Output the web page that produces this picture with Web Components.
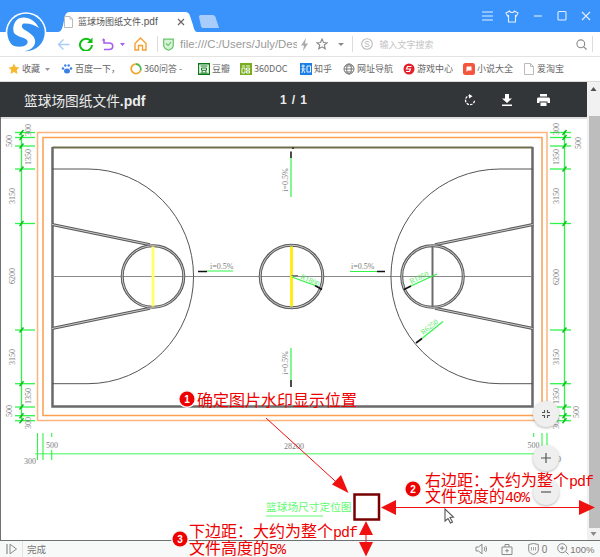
<!DOCTYPE html>
<html>
<head>
<meta charset="utf-8">
<style>
html, body { margin: 0; padding: 0; }
body { width: 600px; height: 557px; overflow: hidden; position: relative; background: #fff; font-family: "Noto Sans CJK SC", "Liberation Sans", sans-serif; }
</style>
</head>
<body>
<browser-titlebar title-text="篮球场图纸文件.pdf"></browser-titlebar>
<browser-toolbar url="file:///C:/Users/July/Desktop" placeholder="输入文字搜索"></browser-toolbar>
<bookmark-bar>
  <bookmark-item icon="star" width="53" arrow>收藏</bookmark-item>
  <bookmark-item icon="paw" width="69">百度一下，</bookmark-item>
  <bookmark-item icon="ring" width="68">360问答 -</bookmark-item>
  <bookmark-item icon="douban" width="42">豆瓣</bookmark-item>
  <bookmark-item icon="guan" width="60">360DOC</bookmark-item>
  <bookmark-item icon="zhi" width="43">知乎</bookmark-item>
  <bookmark-item icon="globe" width="60">网址导航</bookmark-item>
  <bookmark-item icon="game" width="60">游戏中心</bookmark-item>
  <bookmark-item icon="novel" width="60">小说大全</bookmark-item>
  <bookmark-item icon="doc" width="60">爱淘宝</bookmark-item>
</bookmark-bar>
<pdf-window>
  <pdf-toolbar title-text="篮球场图纸文件.pdf"></pdf-toolbar>
</pdf-window>
<status-bar>完成</status-bar>
<annotation-layer></annotation-layer>

<script>
// small helper, every element keeps its markup in its own shadow root
function shadow(el, html) {
  el.attachShadow({ mode: 'open' }).innerHTML = html;
}

class BrowserTitlebar extends HTMLElement {
  connectedCallback() {
    shadow(this, `
      <style>
        :host { display: block; height: 32px; background: #3a92fb; position: relative; }
        .row { display: flex; height: 32px; align-items: flex-end; padding-left: 58px; }
        .tab { width: 139px; height: 20px; position: relative; display: flex; align-items: center; }
        .tab svg.shape { position: absolute; left: 0; top: 0; }
        .doc { position: relative; margin-left: 6px; }
        .name { position: relative; margin-left: 5px; font: 9px/12px "Noto Sans CJK SC", sans-serif; color: #555; white-space: nowrap; width: 99px; }
        .name span { font: 10px "Liberation Sans", sans-serif; }
        .close { position: relative; margin-left: 0; }
        .newtab { margin: 0 0 4px 1px; }
        .win { margin-left: auto; display: flex; align-items: center; gap: 9px; height: 32px; padding-right: 8px; }
        .logo { position: absolute; left: 5px; top: 12px; }
      </style>
      <div class="row">
        <div class="tab">
          <svg class="shape" width="139" height="20"><path d="M0 20 C3 20 4 17 5 13 L7 4 C8 1 9 0 12 0 H127 C130 0 131 1 132 4 L135 13 C136 17 137 20 139 20 Z" fill="#fff"/></svg>
          <svg class="doc" width="9" height="12"><path d="M.5.5H6L8.5 3V11.5H.5Z M6 .5V3H8.5" fill="#fff" stroke="#bbb"/></svg>
          <div class="name">篮球场图纸文件<span>.pdf</span></div>
          <svg class="close" width="8" height="8"><path d="M1 1L7 7M7 1L1 7" stroke="#666" stroke-width="1.2"/></svg>
        </div>
        <svg class="newtab" width="22" height="13"><path d="M3 0H15C16 0 17 1 17.500 2L21 13H5C4 13 3.500 12.500 3 11L1 2C.8 1 1.500 0 3 0Z" fill="#a9cdfb"/></svg>
        <div class="win">
          <svg width="16" height="12"><path d="M2 2H13M2 6H13M2 10H13" stroke="#e2efff" stroke-width="1.100"/></svg>
          <svg width="14" height="13"><path d="M4.500 1L1 3L2.500 6L3.500 5.500V12H10.500V5.500L11.500 6L13 3L9.500 1C9 3 5 3 4.500 1Z" fill="none" stroke="#e2efff" stroke-width="1.100"/></svg>
          <svg width="16" height="12" style="margin-left:2px"><path d="M4 6H12" stroke="#e2efff" stroke-width="1.100"/></svg>
          <svg width="14" height="12"><rect x="3" y="1.500" width="8" height="8.500" rx="1" fill="none" stroke="#e2efff" stroke-width="1.100"/></svg>
          <svg width="12" height="12" style="margin-left:2px"><path d="M2 2L10 10M10 2L2 10" stroke="#e2efff" stroke-width="1.100"/></svg>
        </div>
      </div>
      <svg class="logo" width="44" height="44" viewBox="5 12 44 44">
        <circle cx="26" cy="32.500" r="20.300" fill="#fff"/>
        <circle cx="26" cy="32.500" r="18.700" fill="#3390f2"/>
        <path d="M39 28 C35 20 27 16 20 18 C14 20 12 28 14 33 C17 37 24 37 27 40 C29 43 26 46 22 46.500 C17 47 13 46 10 44 C13 49 19 51.500 25 51 C32 50 36 45 35 40 C34 35 28 32 25 30 C21 28 21 24 24 23.500 C29 23 35 25 39 28 Z" fill="#fff"/>
      </svg>`);
  }
}

class BrowserToolbar extends HTMLElement {
  connectedCallback() {
    const url = this.getAttribute('url');
    const ph = this.getAttribute('placeholder');
    shadow(this, `
      <style>
        :host { display: block; height: 25px; box-sizing: border-box; background: #fff; border-bottom: 1px solid #e3e3e3; }
        .row { display: flex; align-items: center; height: 24px; padding-left: 57px; }
        .sep { width: 1px; height: 16px; background: #dcdcdc; flex: none; }
        .url { width: 117px; flex: none; overflow: hidden; white-space: nowrap; margin-left: 6.500px; font: 11.400px "Liberation Sans", sans-serif; color: #999; }
        .ph { font: 9px "Noto Sans CJK SC", sans-serif; color: #c4c4c4; margin-left: 7px; }
        svg { display: block; flex: none; }
      </style>
      <div class="row">
        <svg width="13" height="13"><path d="M12.500 6.500H1.500M6.500 1.500L1.500 6.500L6.500 11.500" fill="none" stroke="#aacdf6" stroke-width="1.400"/></svg>
        <svg width="14" height="14" style="margin-left:9px"><path d="M12 4.500A6 6 0 1 0 13 8" fill="none" stroke="#10bf12" stroke-width="2"/><path d="M13.500 .5V6H8Z" fill="#10bf12"/></svg>
        <svg width="14" height="14" style="margin-left:8px"><path d="M3 2V6H8C13 6 13 12.500 8 12.500H3" fill="none" stroke="#a75cf0" stroke-width="1.600"/><path d="M.5 3.500H3V1Z" fill="#a75cf0"/></svg>
        <svg width="5" height="3" style="margin-left:4.500px"><path d="M0 0H5L2.500 3Z" fill="#a75cf0"/></svg>
        <svg width="13" height="14" style="margin-left:9px"><path d="M6.500 1L12 6.500V13H8.500V8.500H4.500V13H1V6.500Z" fill="none" stroke="#f7a030" stroke-width="1.400"/></svg>
        <div class="sep" style="margin-left:10px"></div>
        <svg width="11" height="13" style="margin-left:5px"><path d="M.7 1.200H10.300V7.500C10.300 10 7.500 11.500 5.500 12.300C3.500 11.500 .7 10 .7 7.500Z" fill="#d8f2d8" stroke="#66c46a" stroke-width="1.200"/><path d="M3 5.500L5.200 7.500L8 4" fill="none" stroke="#66c46a" stroke-width="1.200"/></svg>
        <div class="url">${url}</div>
        <svg width="9" height="13" style="margin-left:3px"><path d="M6 0L1 7.500H4L3 13L8 5.500H5Z" fill="#aaa"/></svg>
        <svg width="12" height="12" style="margin-left:7px"><path d="M6 1L7.500 4.500L11 4.800L8.300 7L9.200 10.800L6 8.800L2.800 10.800L3.700 7L1 4.800L4.500 4.500Z" fill="none" stroke="#8a8a8a" stroke-width="1.100"/></svg>
        <svg width="6" height="3" style="margin-left:9.500px"><path d="M0 0H6L3 3Z" fill="#8a8a8a"/></svg>
        <div class="sep" style="margin-left:8px"></div>
        <svg width="12" height="12" style="margin-left:8px"><circle cx="6" cy="6" r="5.300" fill="none" stroke="#bbb" stroke-width="1.100"/><path d="M8.300 4.200C7 3 4 3 4 4.700C4 6.500 8.200 5.500 8.200 7.400C8.200 9 5 9 3.700 7.800" fill="none" stroke="#bbb"/></svg>
        <div class="ph">${ph}</div>
        <svg width="11" height="11" style="margin-left:auto"><circle cx="4.800" cy="4.800" r="3.900" fill="none" stroke="#8a8a8a" stroke-width="1.100"/><path d="M7.800 7.800L10.500 10.500" stroke="#8a8a8a" stroke-width="1.200"/></svg>
        <div class="sep" style="margin:0 7px 0 5px"></div>
      </div>`);
  }
}

class BookmarkBar extends HTMLElement {
  connectedCallback() {
    shadow(this, `
      <style>
        :host { display: flex; align-items: center; height: 25px; box-sizing: border-box; background: #fff; border-bottom: 1px solid #dcdcdc; padding-left: 8px; }
      </style>
      <slot></slot>`);
  }
}

const BOOKMARK_ICONS = {
  star: '<path d="M6 .5L7.700 4.100L11.500 4.500L8.700 7.100L9.500 11L6 9L2.500 11L3.300 7.100L.5 4.500L4.300 4.100Z" fill="#f5b82e"/>',
  paw: '<g fill="#3d7fe6"><ellipse cx="6" cy="8" rx="3" ry="2.500"/><circle cx="2" cy="5.500" r="1.300"/><circle cx="10" cy="5.500" r="1.300"/><circle cx="4.300" cy="2.500" r="1.200"/><circle cx="7.700" cy="2.500" r="1.200"/></g>',
  ring: '<path d="M9.500 2.500A4.800 4.800 0 1 0 10.500 7.500" fill="none" stroke="#f0a52a" stroke-width="1.700"/><path d="M10.500 7.500A4.800 4.800 0 0 0 6 1.200" fill="none" stroke="#47b94f" stroke-width="1.700"/>',
  douban: '<rect width="12" height="12" fill="#0b7a16"/><rect x="1.200" y="1.500" width="9.600" height="9" fill="#fff"/><path d="M2.500 3H9.500M3.500 5H8.500V7.300H3.500ZM4 8L4.500 9.500M8 8L7.500 9.500M2.500 10H9.500" stroke="#0b7a16" fill="none"/>',
  guan: '<rect width="12" height="12" fill="#77ad1e"/><path d="M2 3H5M2 5H5V10H2ZM6 3H10M6.500 5H9.500V7H6.500ZM6.500 8H9.500V10H6.500Z" stroke="#fff" fill="none" stroke-width=".9"/>',
  zhi: '<rect width="12" height="12" fill="#1c7fe6"/><path d="M1.500 3H5M3 1.500V6M1.500 6H5.500M3 6L2 10M3.500 7L5 10M7 3H10.500V9H7Z" stroke="#fff" fill="none" stroke-width=".9"/>',
  globe: '<g fill="none" stroke="#777"><circle cx="6" cy="6" r="5"/><ellipse cx="6" cy="6" rx="2.300" ry="5"/><path d="M1 6H11M2 3H10M2 9H10"/></g>',
  game: '<circle cx="6" cy="6" r="5.500" fill="#e3202a"/><path d="M8.500 3.500H4.500L3.500 6H7.500L6.500 8.500H3" fill="none" stroke="#fff" stroke-width="1.200"/>',
  novel: '<rect width="12" height="12" rx="2.500" fill="#f4553c"/><path d="M4 3.500H8.500V7.500H5L3.500 9V4Z" fill="#fff"/>',
  doc: '<path d="M1.500 .5H7.500L10.500 3.500V11.500H1.500Z M7.500 .5V3.500H10.500" fill="#fff" stroke="#bbb"/>'
};

class BookmarkItem extends HTMLElement {
  connectedCallback() {
    const icon = BOOKMARK_ICONS[this.getAttribute('icon')];
    const arrow = this.hasAttribute('arrow');
    shadow(this, `
      <style>
        :host { display: flex; align-items: center; flex: none; width: ${this.getAttribute('width')}px; font: 9px/12px "Noto Sans CJK SC", "Liberation Sans", sans-serif; color: #666; white-space: nowrap; }
        svg { display: block; margin-right: 2px; }
        .tri { margin: 0 0 0 5px; }
      </style>
      <svg width="12" height="12">${icon}</svg>
      <span><slot></slot></span>
      ${arrow ? '<svg class="tri" width="5" height="3"><path d="M0 0H5L2.500 3Z" fill="#999"/></svg>' : ''}`);
  }
}

class PdfWindow extends HTMLElement {
  connectedCallback() {
    shadow(this, `
      <style>
        :host { display: flex; height: 458px; }
        .main { flex: 1; display: flex; flex-direction: column; min-width: 0; }
        .bar { width: 13px; background: #f1f1f1; display: flex; flex-direction: column; align-items: center; }
        .thumb { width: 11px; align-self: flex-end; height: 412px; background: #bdbdbd; margin-top: 12px; }
        .up { margin-top: 5px; height: 17px; }
        .down { margin-top: 4px; }
      </style>
      <div class="main">
        <slot></slot>
        <pdf-page></pdf-page>
      </div>
      <div class="bar">
        <svg class="up" width="7" height="4"><path d="M.5 4L3.500 0L6.500 4Z" fill="#505050"/></svg>
        <div class="thumb" style="margin-top:12px"></div>
        <svg class="down" width="7" height="4"><path d="M.5 0L3.500 4L6.500 0Z" fill="#8a8a8a"/></svg>
      </div>`);
  }
}

class PdfToolbar extends HTMLElement {
  connectedCallback() {
    shadow(this, `
      <style>
        :host { display: flex; align-items: center; height: 35px; background: #323639; color: #ececec; padding-top: 1px; box-sizing: border-box; flex: none; }
        .title { margin-left: 24px; width: 245px; font: 13.700px "Noto Sans CJK SC", sans-serif; white-space: nowrap; }
        .title span { font: bold 14px "Liberation Sans", sans-serif; }
        .pages { font: bold 12px "Liberation Sans", sans-serif; display: flex; justify-content: space-between; margin-left: 11px; width: 27px; }
        svg { display: block; flex: none; }
      </style>
      <div class="title">篮球场图纸文件<span>.pdf</span></div>
      <div class="pages"><span>1</span><span>/</span><span>1</span></div>
      <svg width="12" height="12" style="margin-left:157px"><path d="M7 1.800A4.500 4.500 0 1 0 10.500 6" fill="none" stroke="#fff" stroke-width="1.300" stroke-dasharray="2.500 1.200"/><path d="M5 0V4.500L8.500 2.200Z" fill="#fff"/></svg>
      <svg width="12" height="12" style="margin-left:25px"><path d="M4 0H8V4.500H11L6 9L1 4.500H4ZM1 10.500H11V12H1Z" fill="#fff"/></svg>
      <svg width="13" height="12" style="margin-left:24px"><path d="M3 0H10V2.500H3ZM1.500 3.500H11.500C12.300 3.500 13 4.200 13 5V9H10.500V7.500H2.500V9H0V5C0 4.200.7 3.500 1.500 3.500ZM3.500 8.500H9.500V12H3.500Z" fill="#fff"/></svg>`);
  }
}

class PdfPage extends HTMLElement {
  connectedCallback() {
    shadow(this, `
      <style>
        :host { display: block; flex: 1; position: relative; box-sizing: border-box; background: #fff; border-left: 1px solid #6f7275; overflow: hidden; }
        .top { height: 2px; background: #dedede; margin-left: -1px; }
        zoom-buttons { position: absolute; right: 28.500px; top: 284px; }
      </style>
      <div class="top"></div>
      <court-drawing></court-drawing>
      <zoom-buttons></zoom-buttons>`);
  }
}

class CourtDrawing extends HTMLElement {
  connectedCallback() {
    const G = '#2ff547';
    const ys = [132.5, 137.5, 146, 169, 223.5, 330, 383.7, 407, 415.7, 420.7];
    const ticks = (x1, x2, xm) => ys.map(y =>
      `<path d="M${x1} ${y}H${x2}" stroke="${G}" stroke-width="1.300"/><path d="M${xm - 2} ${y + 2.500}L${xm + 2} ${y - 2.500}" stroke="#0eb820" stroke-width="1.400"/>`).join('');
    const vlabel = (x, y, t) => `<text transform="rotate(-90 ${x} ${y})" x="${x}" y="${y}" text-anchor="middle" class="d">${t}</text>`;
    // court markings are double lines in the file: dark stroke with a pale core
    const twin = d => `<path d="${d}" fill="none" stroke="#5a5a5a" stroke-width="3"/><path d="${d}" fill="none" stroke="#d8d8d8" stroke-width=".9"/>`;
    const ring = (cx, r) => `<circle cx="${cx}" cy="276.500" r="${r}" fill="none" stroke="#5a5a5a" stroke-width="3"/><circle cx="${cx}" cy="276.500" r="${r}" fill="none" stroke="#d8d8d8" stroke-width=".9"/>`;
    shadow(this, `
      <style>
        :host { display: block; }
        svg { display: block; margin-left: -1px; }
        .d { font: 8px "Liberation Serif", serif; fill: #7d7d7d; }
        .g { font: 7.500px "Liberation Serif", serif; fill: #55e965; }
      </style>
      <svg width="587" height="421" viewBox="0 119 587 421">
        <!-- orange margins -->
        <rect x="37.500" y="132.500" width="509.500" height="288" fill="none" stroke="#fdb47c" stroke-width="1.500"/>
        <rect x="43" y="137.500" width="499" height="278" fill="none" stroke="#fb9f50" stroke-width="1.500"/>
        <!-- court -->
        <path d="M52.500 147.500H532.500" stroke="#6f6f4c" stroke-width="2.200"/>
        <path d="M52.500 147V406.500H532.500V147" fill="none" stroke="#6a6a6a" stroke-width="2.500"/>
        <path d="M53 276.500H532" stroke="#8a8a8a" stroke-width="1"/>
        <path d="M52 169H88A105.500 107.300 0 0 1 88 383.700H52" fill="none" stroke="#555"/>
        <path d="M533 169H500A109 107.300 0 0 0 500 383.700H533" fill="none" stroke="#555"/>
        ${twin('M52 224.500L150 244.700')}
        ${twin('M52 328.500L150 308.300')}
        ${twin('M533 224.500L435 244.700')}
        ${twin('M533 328.500L435 308.300')}
        ${ring(153, 30.800)}
        ${ring(432.500, 30.800)}
        ${ring(291.500, 31.300)}
        <path d="M153 246.500V306.500" stroke="#ffff70" stroke-width="3"/>
        <path d="M291.500 246.500V306.500" stroke="#ffec1a" stroke-width="3"/>
        <path d="M432.500 246.500V306.500" stroke="#6a6a6a" stroke-width="2"/>
        <!-- slope marks -->
        <path d="M291 158V197M291 348V380M207 271H233M350 271.500H377" stroke="${G}" stroke-width="1.200"/>
        <path d="M291 151.500V158M291 380V387M198 271.500H207M377 271.500H385M293 147.500V149" stroke="#111" stroke-width="1.500"/>
        <path d="M291.500 275.500H298" stroke="#777"/>
        <path d="M292 277L315 285.500" stroke="${G}" stroke-width="1.200"/>
        <path d="M315 285.500L322 289.500" stroke="#111" stroke-width="1.700"/>
        <path d="M437 274L411 286" stroke="${G}" stroke-width="1.200"/>
        <path d="M411 286L404 289.500" stroke="#111" stroke-width="1.700"/>
        <path d="M443 321.500L422 338.500" stroke="${G}" stroke-width="1.200"/>
        <path d="M422 338.500L416 343" stroke="#111" stroke-width="1.700"/>
        <text class="d" transform="rotate(-90 288 180)" x="288" y="180" text-anchor="middle">i=0.5%</text>
        <text class="d" transform="rotate(-90 288 363)" x="288" y="363" text-anchor="middle">i=0.5%</text>
        <text class="d" x="210" y="269">i=0.5%</text>
        <text class="d" x="351" y="269">i=0.5%</text>
        <text class="g" transform="rotate(24 300 278.500)" x="300" y="278.500">R1800</text>
        <text class="g" transform="rotate(-25 411 284)" x="411" y="284">R1850</text>
        <text class="g" transform="rotate(-38 423 335)" x="423" y="335">R6250</text>
        <!-- dimensions left -->
        <path d="M21.500 131V421" stroke="${G}" stroke-width="1.300"/>
        ${ticks(15, 35, 21.500)}
        ${vlabel(31, 130, '300')}${vlabel(12, 141, '500')}${vlabel(31, 157, '1350')}${vlabel(15, 196, '3150')}${vlabel(15, 276, '6200')}${vlabel(15, 357, '3150')}${vlabel(31, 396, '1350')}${vlabel(12, 411, '500')}${vlabel(31, 423, '300')}
        <!-- dimensions right -->
        <path d="M564.500 131V421" stroke="${G}" stroke-width="1.300"/>
        ${ticks(550, 571, 564.500)}
        ${vlabel(559, 129, '300')}${vlabel(581, 143, '500')}${vlabel(559, 157, '1350')}${vlabel(559, 196, '3150')}${vlabel(559, 277, '6200')}${vlabel(559, 357, '3150')}${vlabel(559, 396, '1350')}${vlabel(579, 412, '500')}${vlabel(559, 423, '300')}
        <!-- dimensions bottom -->
        <path d="M35 453.700H534" stroke="#7dfb8e" stroke-width="1.400"/>
        <path d="M37.500 433V460M43 433V460M51.700 433V437M51.700 450V460M533.700 433V437M542 433V460M547 433V460" stroke="${G}" stroke-width="1.100"/>
        <text class="d" x="46" y="448">500</text>
        <text class="d" x="24" y="464">300</text>
        <text class="d" x="284" y="449">28200</text>
        <text class="d" x="527.500" y="448">500</text>
        <text class="d" x="549" y="462">300</text>
        <!-- 定位图 -->
        <text x="266" y="510.500" style='font: 10.700px "Noto Sans CJK SC", sans-serif; fill: #5dfb70'>篮球场尺寸定位图</text>
        <path d="M266 516H323" stroke="#5dfb70"/>
      </svg>`);
  }
}

class ZoomButtons extends HTMLElement {
  connectedCallback() {
    shadow(this, `
      <style>
        :host { display: flex; flex-direction: column; }
        .b { width: 26px; height: 26px; border-radius: 50%; background: #efefef; box-shadow: 0 1px 3px rgba(0,0,0,.28); display: flex; align-items: center; justify-content: center; }
        .plus { margin-top: 18px; }
        .minus { margin-top: 8px; }
      </style>
      <div class="b"><svg width="10" height="10"><path d="M1 3.500H3.500V1M6.500 1V3.500H9M9 6.500H6.500V9M3.500 9V6.500H1" fill="none" stroke="#555" stroke-width="1.100"/></svg></div>
      <div class="b plus"><svg width="10" height="10"><path d="M0 5H10M5 0V10" stroke="#555" stroke-width="1.200"/></svg></div>
      <div class="b minus"><svg width="10" height="10"><path d="M0 5H10" stroke="#555" stroke-width="1.200"/></svg></div>`);
  }
}

class StatusBar extends HTMLElement {
  connectedCallback() {
    shadow(this, `
      <style>
        :host { display: flex; align-items: center; height: 17px; box-sizing: border-box; background: #f7f8f8; border-top: 1px solid #6f7275; color: #777; }
        svg { display: block; flex: none; }
        .sep { width: 1px; height: 16px; background: #e4e4e4; margin-left: 4px; }
        .t { font: 9.500px "Noto Sans CJK SC", sans-serif; margin-left: 4px; flex: 1; }
        .n { font: 10px "Liberation Sans", sans-serif; margin-left: 3px; }
        .p { font: 9.500px "Liberation Sans", sans-serif; margin: 0 5.500px 0 1px; }
      </style>
      <svg width="12" height="12" style="margin-left:6px"><path d="M1 1V11" stroke="#8a8a8a" stroke-width="1.200"/><path d="M4 1.200L10.500 6L4 10.800Z" fill="none" stroke="#8a8a8a"/></svg>
      <div class="sep"></div>
      <div class="t"><slot></slot></div>
      <svg width="12" height="12"><path d="M1 4H3.500L7 1.200V10.800L3.500 8H1Z" fill="none" stroke="#8a8a8a"/><path d="M9 4C10 5 10 7 9 8M10.500 3C12 4.500 12 7.500 10.500 9" fill="none" stroke="#8a8a8a"/></svg>
      <svg width="12" height="12" style="margin-left:14px"><path d="M1 4H11V11.500H1ZM4 4V1.500H8V4M6 6V9.500M4.200 7.700H7.800" fill="none" stroke="#8a8a8a"/></svg>
      <svg width="11" height="12" style="margin-left:15px"><path d="M.7 1.500L5.500 .5L10.300 1.500V7C10.300 9.500 7.500 11 5.500 11.500C3.500 11 .7 9.500 .7 7Z" fill="none" stroke="#8a8a8a"/><path d="M3.500 4V7.500M5.500 4V7.500M7.500 4V7.500" stroke="#aaa"/></svg>
      <span class="n">0</span>
      <svg width="12" height="12" style="margin-left:10px"><circle cx="5.200" cy="5.200" r="4.500" fill="none" stroke="#8a8a8a"/><path d="M8.500 8.500L11.500 11.500M3 5.200H7.400M5.200 3V7.400" stroke="#8a8a8a"/></svg>
      <span class="p">100%</span>`);
  }
}

class AnnotationLayer extends HTMLElement {
  connectedCallback() {
    const badge = (x, y, n) => `
      <circle cx="${x}" cy="${y}" r="9" fill="#f4f4f4"/>
      <circle cx="${x}" cy="${y}" r="7.500" fill="#ee0000"/>
      <text x="${x}" y="${y + 3.500}" text-anchor="middle" style='font: bold 10px "Liberation Sans", sans-serif; fill: #fff'>${n}</text>`;
    shadow(this, `
      <style>
        :host { position: absolute; left: 0; top: 0; width: 600px; height: 557px; pointer-events: none; }
        svg { display: block; }
        .a { font: 16px "Noto Sans CJK SC", sans-serif; fill: #ee0000; }
        .l { font: 15px "Liberation Mono", monospace; letter-spacing: -1px; }
      </style>
      <svg width="600" height="557">
        <!-- marker square -->
        <rect x="354.500" y="494.500" width="24.500" height="25" fill="#fff" stroke="#780000" stroke-width="2.500"/>
        <!-- arrows -->
        <path d="M266 418L345 490" stroke="#f01010"/>
        <path d="M348.500 493L332 484.500L341 475Z" fill="#f01010"/>
        <path d="M393 507.500H581" stroke="#f01010"/>
        <path d="M381 507.500L396 500V515Z M595 507.500L579 500V515Z" fill="#f01010"/>
        <path d="M366 534V544" stroke="#f01010"/>
        <path d="M366 521L373 535H359Z M366 556.500L373 542H359Z" fill="#f01010"/>
        ${badge(187, 399, 1)}
        <text class="a" x="197" y="405.500">确定图片水印显示位置</text>
        ${badge(413, 489, 2)}
        <text class="a" x="425" y="486">右边距：大约为整个<tspan class="l">pdf</tspan></text>
        <text class="a" x="425" y="502">文件宽度的<tspan class="l">40%</tspan></text>
        ${badge(180, 539, 3)}
        <text class="a" x="189" y="537">下边距：大约为整个<tspan class="l">pdf</tspan></text>
        <text class="a" x="189" y="553.500">文件高度的<tspan class="l">5%</tspan></text>
        <!-- mouse pointer -->
        <path d="M445 509V521L448 518.500L450.500 523L452.500 522L450 517.500L453.500 517Z" fill="#fff" stroke="#555" stroke-width="1.100"/>
      </svg>`);
  }
}

customElements.define('browser-titlebar', BrowserTitlebar);
customElements.define('browser-toolbar', BrowserToolbar);
customElements.define('bookmark-bar', BookmarkBar);
customElements.define('bookmark-item', BookmarkItem);
customElements.define('pdf-window', PdfWindow);
customElements.define('pdf-toolbar', PdfToolbar);
customElements.define('pdf-page', PdfPage);
customElements.define('court-drawing', CourtDrawing);
customElements.define('zoom-buttons', ZoomButtons);
customElements.define('status-bar', StatusBar);
customElements.define('annotation-layer', AnnotationLayer);
</script>
</body>
</html>
